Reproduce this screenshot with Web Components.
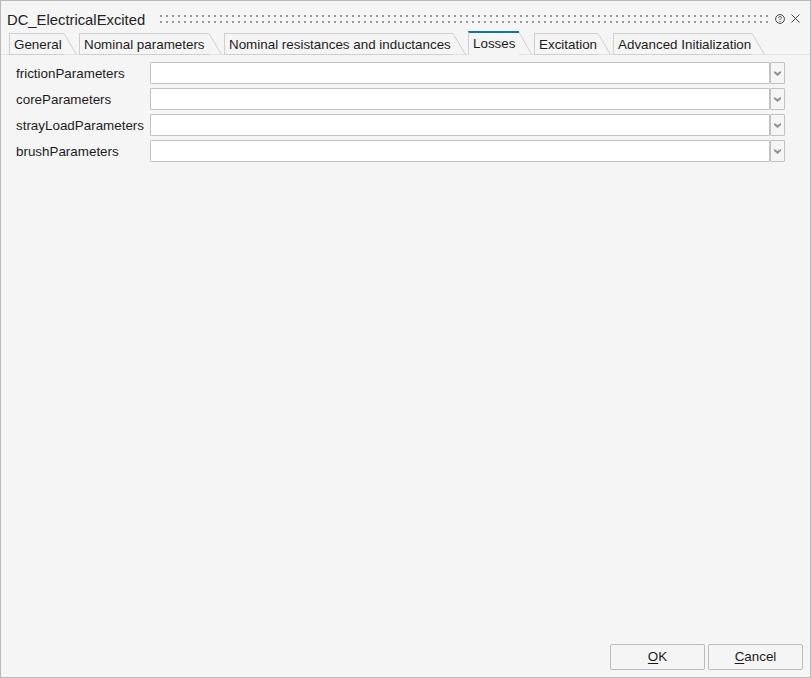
<!DOCTYPE html>
<html>
<head>
<meta charset="utf-8">
<title>DC_ElectricalExcited</title>
<style>
    html, body { margin: 0; height: 100%; background: #f5f5f5; }
    body { font: 13.4px "Liberation Sans", Arial, sans-serif; color: #1c1c1c; overflow: hidden; }
</style>
</head>
<body>
<param-dialog>
    <dialog-title slot="title">DC_ElectricalExcited</dialog-title>
    <tab-bar slot="tabs">
        <tab-item w="55">General</tab-item>
        <tab-item w="130">Nominal parameters</tab-item>
        <tab-item w="229">Nominal resistances and inductances</tab-item>
        <tab-item w="51" active>Losses</tab-item>
        <tab-item w="64">Excitation</tab-item>
        <tab-item w="139">Advanced Initialization</tab-item>
    </tab-bar>
    <param-field>frictionParameters</param-field>
    <param-field>coreParameters</param-field>
    <param-field>strayLoadParameters</param-field>
    <param-field>brushParameters</param-field>
    <dialog-button slot="buttons" key="O" rest="K"></dialog-button>
    <dialog-button slot="buttons" key="C" rest="ancel"></dialog-button>
</param-dialog>

<script>
const dialogTemplate = document.createElement('template')
dialogTemplate.innerHTML = `
    <style>
        :host {
            display: flex;
            flex-direction: column;
            box-sizing: border-box;
            height: 678px;
            border: 1px solid #b9b9b9;
            background: #f5f5f5;
        }
        .fields {
            flex: 1;
            display: flex;
            flex-direction: column;
            gap: 4px;
            padding: 7px 25px 0 15px;
        }
        .buttons {
            display: flex;
            justify-content: flex-end;
            gap: 3px;
            padding: 0 7px 7px 0;
        }
    </style>
    <slot name="title"></slot>
    <slot name="tabs"></slot>
    <div class="fields"><slot></slot></div>
    <div class="buttons"><slot name="buttons"></slot></div>
`

class ParamDialog extends HTMLElement {
    constructor () {
        super()
        this.attachShadow({ mode: 'open' }).appendChild(dialogTemplate.content.cloneNode(true))
    }
}

const titleTemplate = document.createElement('template')
titleTemplate.innerHTML = `
    <style>
        :host {
            display: flex;
            align-items: center;
            height: 30px;
            padding: 5px 0 0 6px;
            box-sizing: border-box;
        }
        .name { font-size: 14.800px; color: #222; margin-top: 2px; }
        .grip {
            flex: 1;
            height: 8px;
            margin: 1px 5px 0 15px;
            background-image: conic-gradient(from 270deg at 2px 2px, #999 25%, transparent 0);
            background-size: 6px 6px;
        }
        svg { display: block; }
        .help { margin-right: 6px; }
        .close { margin-right: 10px; }
    </style>
    <span class="name"><slot></slot></span>
    <div class="grip"></div>
    <svg class="help" width="10" height="10" viewBox="0 0 10 10" fill="none" stroke="#444">
        <circle cx="5" cy="5" r="4.400"/>
        <path d="M3.600 4c0-2 2.800-2 2.800-.3C6.400 4.800 5 4.700 5 6"/>
        <path d="M5 6.800v1"/>
    </svg>
    <svg class="close" width="9" height="9" viewBox="0 0 9 9" fill="none" stroke="#444">
        <path d="M.5.5l8 8M8.500.5l-8 8"/>
    </svg>
`

class DialogTitle extends HTMLElement {
    constructor () {
        super()
        this.attachShadow({ mode: 'open' }).appendChild(titleTemplate.content.cloneNode(true))
    }
}

const barTemplate = document.createElement('template')
barTemplate.innerHTML = `
    <style>
        :host {
            display: flex;
            align-items: flex-end;
            gap: 2px;
            height: 24px;
            padding-left: 8px;
            box-sizing: border-box;
            border-bottom: 1px solid #e3e3e3;
        }
    </style>
    <slot></slot>
`

class TabBar extends HTMLElement {
    constructor () {
        super()
        this.attachShadow({ mode: 'open' }).appendChild(barTemplate.content.cloneNode(true))
    }
}

const tabTemplate = document.createElement('template')
tabTemplate.innerHTML = `
    <style>
        :host {
            display: flex;
            height: 22px;
            margin-bottom: -1px;
        }
        .label {
            box-sizing: border-box;
            padding: 3px 0 0 4px;
            border: 1px solid #cfcfcf;
            border-right: 0;
            white-space: nowrap;
            color: #1c1c1c;
        }
        svg { display: block; }
        :host([active]) { height: 24px; }
        :host([active]) .label {
            border-top: 2px solid #0a77a8;
            border-bottom: 0;
            padding-top: 3px;
            background: #f5f5f5;
        }
    </style>
    <div class="label"><slot></slot></div>
    <svg width="13" height="22" viewBox="0 0 13 22" fill="none" stroke="#cfcfcf">
        <path d="M0 .5L12.500 21.500"/>
    </svg>
`

class TabItem extends HTMLElement {
    constructor () {
        super()
        this.attachShadow({ mode: 'open' }).appendChild(tabTemplate.content.cloneNode(true))
        this.shadowRoot.querySelector('.label').style.width = this.getAttribute('w') + 'px'
        if (this.hasAttribute('active')) {
            const svg = this.shadowRoot.querySelector('svg')
            svg.setAttribute('height', '24')
            svg.setAttribute('viewBox', '0 0 13 24')
            svg.querySelector('path').setAttribute('d', 'M0 1L12.500 23.500')
        }
    }
}

const fieldTemplate = document.createElement('template')
fieldTemplate.innerHTML = `
    <style>
        :host {
            display: grid;
            grid-template-columns: 134px 1fr 15px;
            height: 22px;
            align-items: center;
        }
        .name { white-space: nowrap; }
        .input, .drop {
            box-sizing: border-box;
            height: 22px;
            border: 1px solid #c2c2c2;
            border-radius: 1px;
        }
        .input { background: #fff; }
        .drop { display: flex; align-items: center; justify-content: center; background: #f5f5f5; }
        svg { display: block; }
    </style>
    <span class="name"><slot></slot></span>
    <div class="input"></div>
    <div class="drop">
        <svg width="7" height="5" viewBox="0 0 7 5" fill="#929292">
            <path d="M0 0l3.500 2 3.500-2v2L3.500 5 0 2z"/>
        </svg>
    </div>
`

class ParamField extends HTMLElement {
    constructor () {
        super()
        this.attachShadow({ mode: 'open' }).appendChild(fieldTemplate.content.cloneNode(true))
    }
}

const buttonTemplate = document.createElement('template')
buttonTemplate.innerHTML = `
    <style>
        :host {
            display: flex;
            align-items: center;
            justify-content: center;
            box-sizing: border-box;
            width: 95px;
            height: 26px;
            padding-bottom: 2px;
            border: 1px solid #bdbdbd;
            border-radius: 2px;
        }
        u { text-underline-offset: 2px; }
    </style>
    <span><u class="key"></u><span class="rest"></span></span>
`

class DialogButton extends HTMLElement {
    constructor () {
        super()
        this.attachShadow({ mode: 'open' }).appendChild(buttonTemplate.content.cloneNode(true))
        this.shadowRoot.querySelector('.key').textContent = this.getAttribute('key')
        this.shadowRoot.querySelector('.rest').textContent = this.getAttribute('rest')
    }
}

customElements.define('param-dialog', ParamDialog)
customElements.define('dialog-title', DialogTitle)
customElements.define('tab-bar', TabBar)
customElements.define('tab-item', TabItem)
customElements.define('param-field', ParamField)
customElements.define('dialog-button', DialogButton)
</script>
</body>
</html>
